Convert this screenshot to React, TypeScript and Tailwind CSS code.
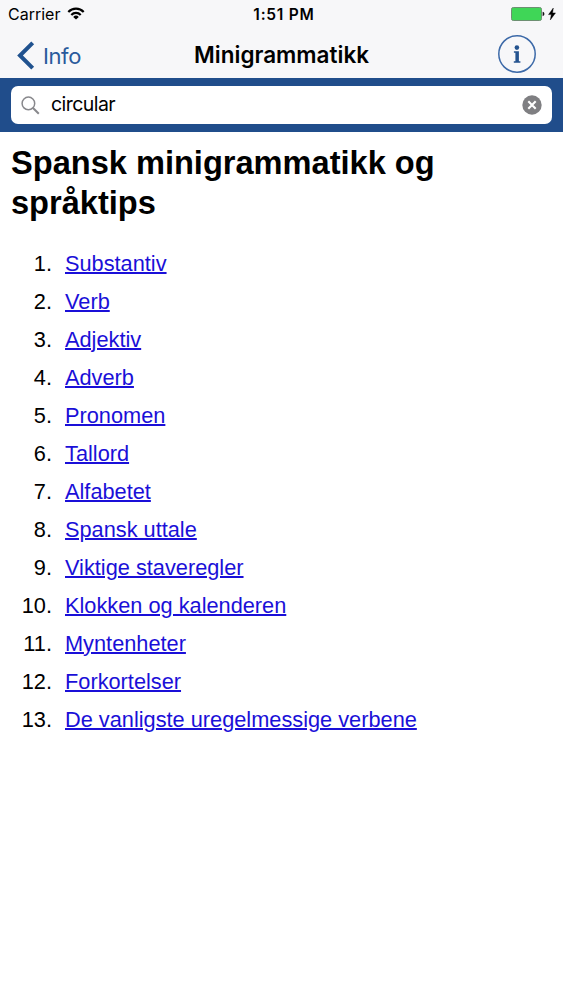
const topics = [
    "Substantiv",
    "Verb",
    "Adjektiv",
    "Adverb",
    "Pronomen",
    "Tallord",
    "Alfabetet",
    "Spansk uttale",
    "Viktige staveregler",
    "Klokken og kalenderen",
    "Myntenheter",
    "Forkortelser",
    "De vanligste uregelmessige verbene",
]

const StatusBar = () => {
    return (
        <div className="grid h-7 grid-cols-3 items-center pl-2 pr-[7px] text-black">
            <div className="flex items-center gap-[7px]">
                <span className="text-[16px] leading-none">Carrier</span>
                <svg width="18" height="13" viewBox="0 0 18 13" fill="none" stroke="#000" strokeWidth="2.200" className="-mt-[2px]">
                    <path d="M1.300 4.900a10.800 10.800 0 0 1 15.400 0" />
                    <path d="M4.300 7.900a6.600 6.600 0 0 1 9.400 0" />
                    <path d="M9 12.600 6.200 9.900a4 4 0 0 1 5.600 0z" fill="#000" stroke="none" />
                </svg>
            </div>
            <span className="pl-[4px] pt-[2px] text-center text-[15.5px] leading-none font-semibold tracking-[0.75px] whitespace-nowrap">1:51 PM</span>
            <div className="flex items-center justify-end">
                <svg width="34" height="14" viewBox="0 0 34 14">
                    <rect x="0.5" y="0.5" width="30" height="13" rx="1.8" fill="#3fd657" stroke="#6d8f72" />
                    <path d="M31.600 4.800c2.400.4 2.400 4 0 4.400z" fill="#111" />
                </svg>
                <svg width="8" height="12" viewBox="0 0 8 12" className="ml-[3px]">
                    <path d="M5.300 0 0.500 6.600H3.300L2.300 12 7.500 4.900H4.600z" fill="#000" stroke="#000" strokeWidth="0.400" />
                </svg>
            </div>
        </div>
    )
}

const NavBar = () => {
    return (
        <div className="flex h-[50px] items-center pl-[17px] pr-[27px] pt-[5px]">
            <a className="flex flex-1 items-center gap-[8px] text-[#2a5a9c]">
                <svg width="18" height="29" viewBox="0 0 18 29" fill="none" stroke="#20528f" strokeWidth="4">
                    <path d="M15.700 1.800 3 14.500 15.700 27.200" />
                </svg>
                <span className="text-[22px] leading-none tracking-[-0.4px]">Info</span>
            </a>
            <h1 className="text-[22.5px] leading-none font-semibold text-black">Minigrammatikk</h1>
            <div className="-mt-[3px] flex w-[167px] justify-end">
                <svg width="38" height="38" viewBox="0 0 38 38">
                    <circle cx="19" cy="19" r="18.200" fill="none" stroke="#3c69a8" strokeWidth="1.500" />
                    <circle cx="18.900" cy="12.600" r="2.300" fill="#24538f" />
                    <path d="M15.900 16.300h5v9.900h1.500v1.500h-6.600v-1.500h1.600v-8.500h-1.500z" fill="#24538f" />
                </svg>
            </div>
        </div>
    )
}

const SearchBar = () => {
    return (
        <div className="flex h-[54px] items-center bg-[#204d8b] px-[11px]">
            <div className="flex h-[38px] w-full items-center rounded-[7px] bg-white px-[10px]">
                <svg width="19" height="19" viewBox="0 0 19 19" fill="none" stroke="#88888c" strokeWidth="1.500">
                    <circle cx="7.400" cy="7.400" r="6.300" />
                    <path d="m12 12 5.800 5.800" strokeWidth="2" />
                </svg>
                <span className="ml-[11px] flex-1 text-[19.5px] leading-none tracking-[-0.55px] text-black">circular</span>
                <svg width="20" height="20" viewBox="0 0 20 20">
                    <circle cx="10" cy="10" r="9.700" fill="#7f7f82" />
                    <path d="m6.300 6.300 7.400 7.400m0-7.400-7.400 7.400" stroke="#fff" strokeWidth="2.100" />
                </svg>
            </div>
        </div>
    )
}

export default function App() {
    return (
        <div className="min-h-[1000px] w-full bg-white font-[Inter,sans-serif]">
            <header className="bg-[#f7f7f9]">
                <StatusBar />
                <NavBar />
                <SearchBar />
            </header>
            <main className="px-[11px] pt-[11px] font-['Liberation_Sans',Arial,sans-serif] text-black">
                <h2 className="text-[32.6px] leading-[40px] font-bold">Spansk minigrammatikk og språktips</h2>
                <ol className="mt-[22px]">
                    {topics.map((topic, i) => (
                        <li key={topic} className="flex h-[38px] items-center text-[21.75px] leading-[38px]">
                            <span className="w-[41px] text-right">{i + 1}.</span>
                            <a className="ml-[13px] text-[#1a0fd8] underline decoration-[1.5px] underline-offset-[1px]">{topic}</a>
                        </li>
                    ))}
                </ol>
            </main>
        </div>
    )
}
